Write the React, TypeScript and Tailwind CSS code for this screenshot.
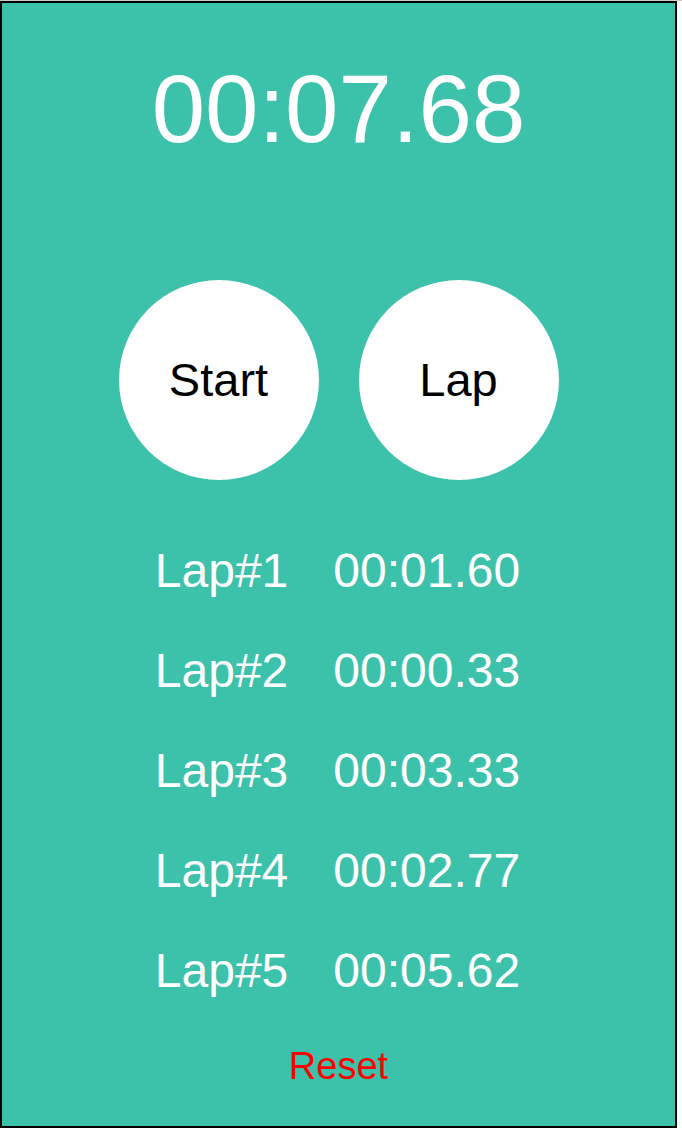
import React from "react";

const laps = [
  { label: "Lap#1", time: "00:01.60" },
  { label: "Lap#2", time: "00:00.33" },
  { label: "Lap#3", time: "00:03.33" },
  { label: "Lap#4", time: "00:02.77" },
  { label: "Lap#5", time: "00:05.62" },
];

export default function App() {
  return (
    <div className="w-[682px] h-[1132px] bg-white border-t border-[#cccccc] font-['Liberation_Sans',Arial,sans-serif]">
      <div className="w-[677px] h-[1127px] border-2 border-black bg-[#3cc1ab] flex flex-col items-center">
        {/* Timer */}
        <div className="mt-[58px] text-[96px] leading-none text-white">
          00:07.68
        </div>

        {/* Controls */}
        <div className="mt-[123px] flex gap-[40px]">
          <button className="w-[200px] h-[200px] rounded-full bg-white text-black text-[47px] flex items-center justify-center">
            Start
          </button>
          <button className="w-[200px] h-[200px] rounded-full bg-white text-black text-[47px] flex items-center justify-center">
            Lap
          </button>
        </div>

        {/* Lap list */}
        <div className="mt-[41px] flex flex-col pr-[2px]">
          {laps.map((l) => (
            <div
              key={l.label}
              className="flex justify-center gap-[45px] text-[48px] leading-[100px] text-white"
            >
              <span>{l.label}</span>
              <span>{l.time}</span>
            </div>
          ))}
        </div>

        <button className="mt-[26px] text-[38px] leading-none text-[#ff0000]">
          Reset
        </button>
      </div>
    </div>
  );
}
